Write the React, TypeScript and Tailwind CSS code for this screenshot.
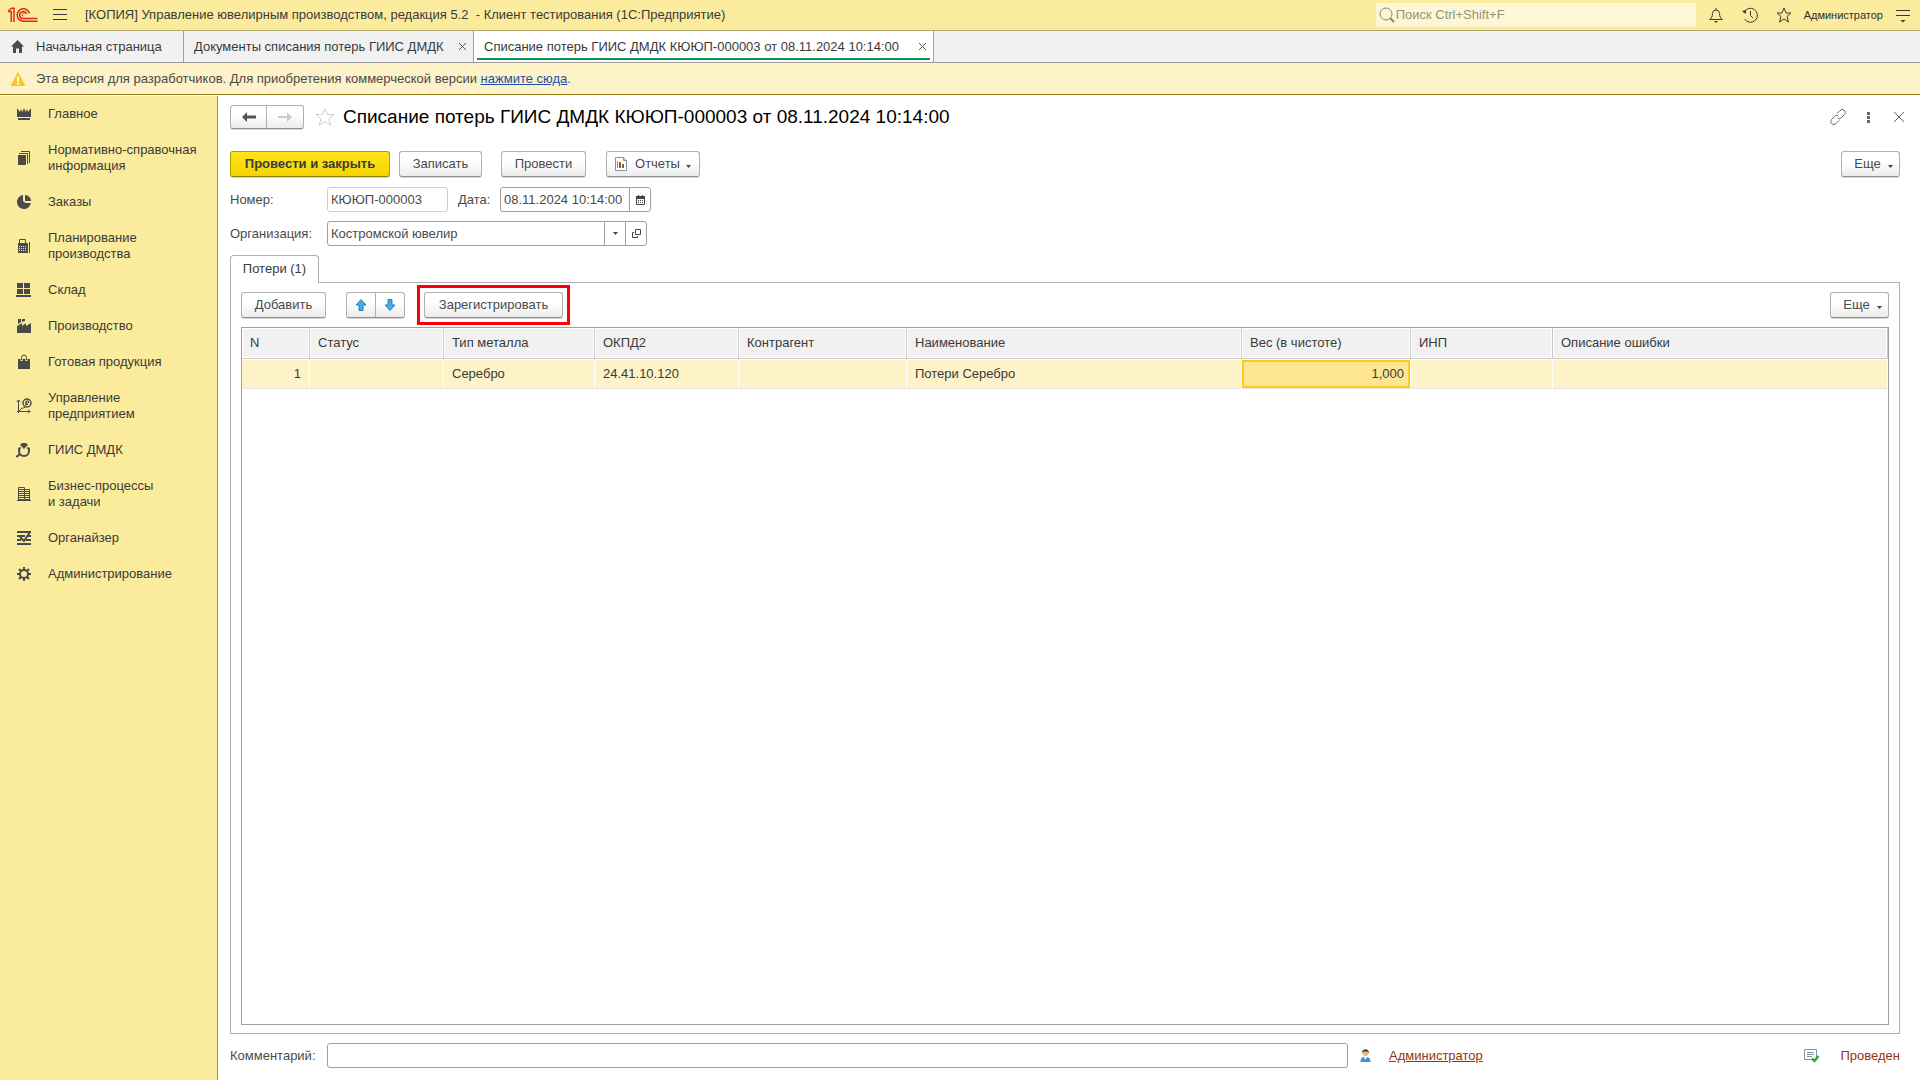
import type { ReactNode } from "react"
import { useState } from "react"

type NavItem = {
  label: string
  icon: ReactNode
}

type LossRow = {
  n: number
  status: string
  metal: string
  okpd: string
  contractor: string
  name: string
  weight: string
  inp: string
  error: string
}

const INK = "#4a4a4a"

const navItems: NavItem[] = [
  {
    label: "Главное",
    icon: (
      <>
        <path d="M1 2l3 4 1-3 1.500 3L8 2l1.500 4L11 3l1 3 3-4v9H1z" fill={INK} />
        <path d="M2 12h12v2H2z" fill={INK} />
      </>
    ),
  },
  {
    label: "Нормативно-справочная\nинформация",
    icon: (
      <>
        <path d="M2 5h8v10H2z" fill={INK} />
        <path d="M3 3.500h8.500V14M5 1.500h8.500V13" fill="none" stroke={INK} />
      </>
    ),
  },
  {
    label: "Заказы",
    icon: (
      <>
        <path d="M7 1.100A7 7 0 1 0 14.900 9H9.500L7 7z" fill={INK} />
        <path d="M9 1a6 6 0 0 1 6 6H9z" fill={INK} />
      </>
    ),
  },
  {
    label: "Планирование\nпроизводства",
    icon: (
      <>
        <path d="M3.500 6v-4.500h6V6" fill="none" stroke={INK} />
        <path d="M2 5h9a1 1 0 0 1 1 1v9H2z" fill={INK} />
        <path d="M13.500 4v11" stroke={INK} />
        <path d="M3 8.500h8M3 10.500h8M3 12.500h8" stroke="#fbec9d" strokeDasharray="1 1" />
        <path d="M4 4.500h5" stroke="#fbec9d" />
      </>
    ),
  },
  {
    label: "Склад",
    icon: <path d="M1 1h6v5H1zM8 1h6v5H8zM1 7h6v5H1zM8 7h6v5H8zM0 13h15v2H0z" fill={INK} />,
  },
  {
    label: "Производство",
    icon: <path d="M1 15V8l5-3v3l4-3v3l5-3v10zM2 1h3v3L2 6zM6 1h3v2L6 4z" fill={INK} />,
  },
  {
    label: "Готовая продукция",
    icon: (
      <>
        <path d="M2 5h12v10H2z" fill={INK} />
        <path d="M5.500 7V3.500a2.500 2.500 0 0 1 5 0V7" fill="none" stroke="#fbec9d" strokeWidth="2" />
        <path d="M5.500 6V3.500a2.500 2.500 0 0 1 5 0V6" fill="none" stroke={INK} />
      </>
    ),
  },
  {
    label: "Управление\nпредприятием",
    icon: (
      <>
        <path d="M2.500 15V2M0.500 4l2-2 2 2M1 13.500h13M12 11.500l2 2-2 2M3 13l3-3h2l1-1" fill="none" stroke={INK} />
        <circle cx="11" cy="5" r="4" fill="none" stroke={INK} strokeWidth="1.500" />
        <path d="M10 7.500V3h2.500v2H9M9 6.500h3" fill="none" stroke={INK} />
      </>
    ),
  },
  {
    label: "ГИИС ДМДК",
    icon: (
      <>
        <circle cx="8" cy="9" r="5" fill="none" stroke={INK} strokeWidth="2" />
        <path d="M3 1h10v6l-5-1-5 1z" fill="#fbec9d" />
        <path d="M6 1h4l2 2-4 4-4-4zM2 6l2-1 1 1-2 3zM14 6l-2-1-1 1 2 3z" fill={INK} />
        <path d="M4 12l-3.500 3" stroke={INK} strokeWidth="2" />
      </>
    ),
  },
  {
    label: "Бизнес-процессы\nи задачи",
    icon: (
      <>
        <path d="M2.500 15V1.500h6V15M8.500 3.500h5V15M1 14.500h14" fill="none" stroke={INK} />
        <path d="M2 3.500h6M2 5.500h12M2 7.500h12M2 9.500h12M2 11.500h12M2 13.500h12" stroke={INK} />
      </>
    ),
  },
  {
    label: "Органайзер",
    icon: (
      <>
        <path d="M1 2h14M1 6h8M12 6h3M1 10h4M10 10h5M1 14h14" stroke={INK} strokeWidth="2" />
        <path d="M4 7l4 4 6-9" fill="none" stroke={INK} strokeWidth="2" />
      </>
    ),
  },
  {
    label: "Администрирование",
    icon: (
      <>
        <circle cx="8" cy="8" r="4" fill="none" stroke={INK} strokeWidth="2" />
        <path
          d="M8 1v3M8 12v3M1 8h3M12 8h3M3 3l2 2M11 11l2 2M13 3l-2 2M5 11l-2 2"
          stroke={INK}
          strokeWidth="2"
        />
      </>
    ),
  },
]

const columns = [
  { title: "N", width: "w-[68px]" },
  { title: "Статус", width: "w-[134px]" },
  { title: "Тип металла", width: "w-[151px]" },
  { title: "ОКПД2", width: "w-[144px]" },
  { title: "Контрагент", width: "w-[168px]" },
  { title: "Наименование", width: "w-[335px]" },
  { title: "Вес (в чистоте)", width: "w-[169px]" },
  { title: "ИНП", width: "w-[142px]" },
  { title: "Описание ошибки", width: "" },
]

const rows: LossRow[] = [
  {
    n: 1,
    status: "",
    metal: "Серебро",
    okpd: "24.41.10.120",
    contractor: "",
    name: "Потери Серебро",
    weight: "1,000",
    inp: "",
    error: "",
  },
]

const buttonClass =
  "flex h-[26px] items-center justify-center rounded-[3px] border border-[#b0b0b0] border-b-[#8f8f8f] bg-linear-to-b from-white from-40% to-[#ececec] text-[#4a4a4a] shadow-[0_1px_0_#d8d8d8]"

const cellClass = "border-t border-r border-b border-white border-b-[#e4e4e4]"

function Caret() {
  return (
    <svg className="h-[3px] w-[5px]" viewBox="0 0 5 3">
      <path d="M0 0h5L2.500 3z" fill="#444" />
    </svg>
  )
}

function Logo() {
  return (
    <svg className="h-4 w-[30px]" viewBox="0 0 30 16" fill="none" stroke="#e0251b" strokeWidth="1.500">
      <path d="M0 4.500h3.250V15M0.500 3.500L3.500 1.250h2.500V15" />
      <path d="M21.500 6.500A6.250 6.250 0 1 0 15.500 14.250H29.500" />
      <path d="M18.500 7A3.500 3.500 0 1 0 15.500 11.500H29.500" />
      <path d="M16.500 6.500a1.500 1.500 0 1 0-1 2.500" strokeWidth="1" />
    </svg>
  )
}

function TopBar() {
  return (
    <header className="flex h-[31px] items-center border-b border-[#b0a86c] bg-[#fbec9d] pr-2.5 pl-2">
      <Logo />
      <button type="button" aria-label="Меню" className="ml-[15px]">
        <svg className="h-4 w-[14px]" viewBox="0 0 14 16">
          <path d="M0 2.500h14M0 7.500h14M0 12.500h14" stroke="#3a3a3a" />
        </svg>
      </button>
      <h1 className="ml-[18px] whitespace-pre text-[13px] text-[#3a3a3a]">
        {"[КОПИЯ] Управление ювелирным производством, редакция 5.2  - Клиент тестирования (1С:Предприятие)"}
      </h1>
      <label className="mr-3 ml-auto flex h-6 w-80 items-center rounded-[2px] bg-[#fdf7d6] pl-[3px]">
        <svg className="h-4 w-4 shrink-0" viewBox="0 0 16 16" fill="none" stroke="#8a866f">
          <circle cx="7" cy="7" r="6" />
          <path d="M11 11l4 4" strokeWidth="2" />
        </svg>
        <input
          aria-label="Поиск"
          placeholder="Поиск Ctrl+Shift+F"
          className="ml-px w-full bg-transparent text-[13px] outline-none placeholder:text-[#97927a]"
        />
      </label>
      <button type="button" aria-label="Уведомления" className="mr-[18px]">
        <svg className="h-4 w-4" viewBox="0 0 16 16" fill="none" stroke="#3a3a3a">
          <path d="M1.500 12.500c2-1.500 3-3 3-6a3.500 3.500 0 0 1 7 0c0 3 1 4.500 3 6zM8 1v2" />
          <path d="M6 14h4l-2 2z" fill="#3a3a3a" stroke="none" />
        </svg>
      </button>
      <button type="button" aria-label="История" className="mr-[18px]">
        <svg className="h-4 w-4" viewBox="0 0 16 16" fill="none" stroke="#3a3a3a">
          <path d="M2 5.500A7 7 0 1 1 2.500 12M8.500 4v4.500l2.500 2.500" />
          <path d="M0 4l4-1v4z" fill="#3a3a3a" stroke="none" />
        </svg>
      </button>
      <button type="button" aria-label="Избранное" className="mr-3">
        <svg className="h-4 w-4" viewBox="0 0 16 16" fill="none" stroke="#3a3a3a">
          <path d="M8 1l2 5h5l-4 3.500 1.500 5.500L8 12l-4.500 3L5 9.500 1 6h5z" />
        </svg>
      </button>
      <a href="#user" className="mr-[13px] text-[11px] text-[#2e2e2e]">
        Администратор
      </a>
      <button type="button" aria-label="Настройки">
        <svg className="h-4 w-[14px]" viewBox="0 0 14 16">
          <path d="M0 3.500h14M0 8.500h14" stroke="#3a3a3a" />
          <path d="M4.500 13h5L7 15.500z" fill="#3a3a3a" />
        </svg>
      </button>
    </header>
  )
}

function CloseMark() {
  return (
    <svg className="h-[7px] w-[7px]" viewBox="0 0 7 7">
      <path d="M0 0l7 7M7 0L0 7" stroke="#555" />
    </svg>
  )
}

function WindowTabs() {
  return (
    <nav className="flex h-8 border-b border-[#9c9c9c] bg-[#f1f1f1] text-[13px] text-[#3a3a3a]">
      <a href="#home" className="flex w-[184px] items-center border-r border-[#a0a0a0] pl-[11px]">
        <svg className="mr-3 h-[13px] w-[13px]" viewBox="0 0 13 13">
          <path d="M6.500 0L13 6.500h-2V13H8V8.500H5V13H2V6.500H0z" fill={INK} />
        </svg>
        Начальная страница
      </a>
      <div className="flex w-[290px] items-center justify-between border-r border-[#a0a0a0] pr-[7px] pl-2.5 whitespace-nowrap">
        <a href="#list">Документы списания потерь ГИИС ДМДК</a>
        <button type="button" aria-label="Закрыть вкладку">
          <CloseMark />
        </button>
      </div>
      <div className="flex w-[460px] border-r border-[#a0a0a0] bg-white px-[3px] pb-0.5">
        <div className="flex w-full items-center justify-between border-b-2 border-[#0a9850] pt-1 pr-1 pl-[7px] whitespace-nowrap">
          <a href="#doc">Списание потерь ГИИС ДМДК КЮЮП-000003 от 08.11.2024 10:14:00</a>
          <button type="button" aria-label="Закрыть вкладку">
            <CloseMark />
          </button>
        </div>
      </div>
    </nav>
  )
}

function Notice() {
  return (
    <div className="flex h-8 items-center border-b border-[#9a7d1c] bg-[#fdf2c8] pl-[11px] text-[13px] text-[#4a4a4a]">
      <svg className="mr-[11px] h-[14px] w-[14px]" viewBox="0 0 14 14">
        <path d="M7 0.500L14 14H0z" fill="#f9c81e" stroke="#f9c81e" strokeLinejoin="round" />
        <path d="M7 4.500v5M7 10.500v2" stroke="#fff" strokeWidth="2" />
      </svg>
      <p>
        Эта версия для разработчиков. Для приобретения коммерческой версии{" "}
        <a href="#buy" className="text-[#1c4fa8] underline">
          нажмите сюда
        </a>
        .
      </p>
    </div>
  )
}

function Sidebar() {
  return (
    <aside className="mt-px w-[218px] shrink-0 border-r border-[#9a925c] bg-[#fbec9d]">
      {navItems.map((item) => (
        <a
          key={item.label}
          href="#section"
          className="flex items-center gap-4 py-2.5 pl-4 text-[13px] leading-4 whitespace-pre-line text-[#3a3a3a]"
        >
          <svg className="h-4 w-4 shrink-0" viewBox="0 0 16 16">
            {item.icon}
          </svg>
          <span>{item.label}</span>
        </a>
      ))}
    </aside>
  )
}

function FormHeader() {
  return (
    <div className="flex h-6 items-center">
      <div className="flex h-6 w-[74px] rounded-[3px] border border-[#b0b0b0] border-b-[#8f8f8f] bg-linear-to-b from-white from-40% to-[#ececec] shadow-[0_1px_0_#d8d8d8]">
        <button type="button" aria-label="Назад" className="flex w-1/2 items-center justify-center border-r border-[#b0b0b0]">
          <svg className="h-[10px] w-[14px]" viewBox="0 0 14 10">
            <path d="M0 5l5-5v3.500h9v3H5V10z" fill="#555" />
          </svg>
        </button>
        <button type="button" aria-label="Вперед" className="flex w-1/2 items-center justify-center">
          <svg className="h-[10px] w-[14px]" viewBox="0 0 14 10">
            <path d="M14 5L9 0v4H0v2h9v4z" fill="#ccc" />
          </svg>
        </button>
      </div>
      <button type="button" aria-label="В избранное" className="ml-[11px]">
        <svg className="h-5 w-5" viewBox="0 0 20 20">
          <path
            d="M10 1.500l2.500 6H19l-5 4.500 1.800 6.500L10 14.500l-5.800 4L6 12 1 7.500h6.500z"
            fill="none"
            stroke="#d0d0d0"
          />
        </svg>
      </button>
      <h2 className="ml-2 text-[19px] text-black">Списание потерь ГИИС ДМДК КЮЮП-000003 от 08.11.2024 10:14:00</h2>
      <div className="-mr-1 ml-auto flex items-center">
        <button type="button" aria-label="Ссылка">
          <svg className="h-4 w-4" viewBox="0 0 16 16" fill="none" stroke="#666">
            <path d="M7 4.500l3-3a2.500 2.500 0 0 1 4.500 4L11 9c-1 1-2.500 1-3.500 0" />
            <path d="M9 11.500l-3 3a2.500 2.500 0 0 1-4.500-4L5 7c1-1 2.500-1 3.500 0" />
          </svg>
        </button>
        <button type="button" aria-label="Действия" className="mr-6 ml-[21px]">
          <svg className="h-[11px] w-[3px]" viewBox="0 0 3 11">
            <path d="M0 0h3v3H0zM0 4h3v3H0zM0 8h3v3H0z" fill="#666" />
          </svg>
        </button>
        <button type="button" aria-label="Закрыть">
          <svg className="h-[10px] w-[10px]" viewBox="0 0 10 10">
            <path d="M0 0l10 10M10 0L0 10" stroke="#666" />
          </svg>
        </button>
      </div>
    </div>
  )
}

function CommandBar() {
  return (
    <div className="mt-[22px] flex">
      <button
        type="button"
        className="h-[26px] w-40 rounded-[3px] border border-[#b39c00] border-b-[#8f7c00] bg-linear-to-b from-[#ffe61a] to-[#f5d400] font-bold text-[#3a3a3a] shadow-[0_1px_0_#d8d8d8]"
      >
        Провести и закрыть
      </button>
      <button type="button" className={`${buttonClass} ml-[9px] w-[83px]`}>
        Записать
      </button>
      <button type="button" className={`${buttonClass} ml-[19px] w-[85px]`}>
        Провести
      </button>
      <button type="button" className={`${buttonClass} ml-5 w-[94px]`}>
        <svg className="mr-2 h-[14px] w-3" viewBox="0 0 12 14">
          <path d="M0.500 0.500h8l3 3v10h-11z" fill="#fff" stroke="#8194a6" />
          <path d="M8.500 0.500v3h3" fill="none" stroke="#8194a6" />
          <path d="M2 4h1v7H2z" fill="#8194a6" />
          <path d="M4 5h2v6H4z" fill="#e33" />
          <path d="M7 7h2v4H7z" fill="#292" />
        </svg>
        Отчеты
        <span className="ml-1.5 pt-1">
          <Caret />
        </span>
      </button>
      <MoreButton />
    </div>
  )
}

function MoreButton() {
  return (
    <button type="button" className={`${buttonClass} ml-auto w-[59px] gap-[7px] pl-1.5`}>
      Еще
      <span className="pt-1">
        <Caret />
      </span>
    </button>
  )
}

function HeaderFields() {
  return (
    <>
      <div className="mt-2.5 flex h-[25px] items-center">
        <label htmlFor="number" className="w-[97px]">
          Номер:
        </label>
        <input
          id="number"
          defaultValue="КЮЮП-000003"
          className="h-[25px] w-[121px] rounded-[3px] border border-[#cfcfcf] px-[3px] outline-none"
        />
        <label htmlFor="date" className="ml-2.5 w-[42px]">
          Дата:
        </label>
        <div className="flex h-[25px] w-[151px] rounded-[3px] border border-[#a0a0a0]">
          <input id="date" defaultValue="08.11.2024 10:14:00" className="w-[128px] pl-[3px] outline-none" />
          <button
            type="button"
            aria-label="Выбрать дату"
            className="flex flex-1 items-center justify-center border-l border-[#a0a0a0]"
          >
            <svg className="h-[10px] w-[9px]" viewBox="0 0 9 10">
              <path d="M0.500 1.500h8v8h-8z" fill="none" stroke="#444" />
              <path d="M0 1h9v3H0zM2 0h1v1H2zM6 0h1v1H6z" fill="#444" />
              <path d="M2 5.500h5M2 7.500h5" stroke="#444" strokeDasharray="1 1" />
            </svg>
          </button>
        </div>
      </div>
      <div className="mt-[9px] flex h-[25px] items-center">
        <label htmlFor="organization" className="w-[97px]">
          Организация:
        </label>
        <div className="flex h-[25px] w-80 rounded-[3px] border border-[#a0a0a0]">
          <input id="organization" defaultValue="Костромской ювелир" className="min-w-0 flex-1 pl-[3px] outline-none" />
          <button
            type="button"
            aria-label="Выбрать"
            className="flex w-[21px] items-center justify-center border-l border-[#a0a0a0]"
          >
            <Caret />
          </button>
          <button
            type="button"
            aria-label="Открыть"
            className="flex w-[21px] items-center justify-center border-l border-[#a0a0a0]"
          >
            <svg className="h-[9px] w-[9px]" viewBox="0 0 9 9" fill="none" stroke="#444">
              <path d="M3.500 0.500h5v5h-5zM2 3.500H0.500v5h5V7" />
            </svg>
          </button>
        </div>
      </div>
    </>
  )
}

function LossTable() {
  const [selected, setSelected] = useState(1)

  return (
    <div className="mt-[9px] flex-1 border border-[#a0a0a0]">
      <table className="w-full table-fixed border-separate border-spacing-0 text-[#3a3a3a]">
        <thead>
          <tr className="h-[31px]">
            {columns.map((column) => (
              <th
                key={column.title}
                className={`${column.width} border-r border-b border-[#c9c9c9] bg-[#f1f1f1] px-2 text-left font-normal shadow-[inset_0_0_0_1px_#fff]`}
              >
                {column.title}
              </th>
            ))}
          </tr>
        </thead>
        <tbody>
          {rows.map((row) => (
            <tr
              key={row.n}
              onClick={() => setSelected(row.n)}
              className={`h-[30px] ${selected === row.n ? "bg-[#fdf2c8]" : "bg-white"}`}
            >
              <td className={`${cellClass} px-2 text-right`}>{row.n}</td>
              <td className={`${cellClass} px-2`}>{row.status}</td>
              <td className={`${cellClass} px-2`}>{row.metal}</td>
              <td className={`${cellClass} px-2`}>{row.okpd}</td>
              <td className={`${cellClass} px-2`}>{row.contractor}</td>
              <td className={`${cellClass} px-2`}>{row.name}</td>
              <td className={`${cellClass} bg-[#fee591] px-1.5 text-right shadow-[inset_0_0_0_2px_#fbc91f]`}>
                {row.weight}
              </td>
              <td className={`${cellClass} px-2`}>{row.inp}</td>
              <td className={`${cellClass} px-2`}>{row.error}</td>
            </tr>
          ))}
        </tbody>
      </table>
    </div>
  )
}

function LossesPanel() {
  return (
    <>
      <div className="mt-[9px] flex">
        <button
          type="button"
          className="relative -mb-px h-7 w-[89px] rounded-t-[4px] border border-b-0 border-[#b0b0b0] bg-white pb-0.5 text-[#3a3a3a]"
        >
          Потери (1)
        </button>
      </div>
      <section className="flex flex-1 flex-col border border-[#b0b0b0] px-2.5 pt-[9px] pb-2">
        <div className="flex">
          <button type="button" className={`${buttonClass} w-[85px]`}>
            Добавить
          </button>
          <div className={`${buttonClass} ml-5 w-[59px]`}>
            <button
              type="button"
              aria-label="Вверх"
              className="flex h-full flex-1 items-center justify-center border-r border-[#b0b0b0]"
            >
              <svg className="h-3 w-3" viewBox="0 0 12 12">
                <path d="M6 0.500l5 5.500H8v5.500H4V6H1z" fill="#41aeea" stroke="#2b80b3" />
              </svg>
            </button>
            <button type="button" aria-label="Вниз" className="flex h-full flex-1 items-center justify-center">
              <svg className="h-3 w-3" viewBox="0 0 12 12">
                <path d="M6 11.500l5-5.500H8V0.500H4V6H1z" fill="#41aeea" stroke="#2b80b3" />
              </svg>
            </button>
          </div>
          <div className="relative ml-[19px]">
            <button type="button" className={`${buttonClass} w-[139px]`}>
              Зарегистрировать
            </button>
            <div className="pointer-events-none absolute -inset-[7px] border-3 border-[#fb0007]" />
          </div>
          <MoreButton />
        </div>
        <LossTable />
      </section>
    </>
  )
}

function FormFooter() {
  return (
    <footer className="mt-[9px] mb-3 flex h-[25px] items-center">
      <label htmlFor="comment" className="w-[97px] shrink-0">
        Комментарий:
      </label>
      <input id="comment" className="h-[25px] flex-1 rounded-[3px] border border-[#a0a0a0] px-[3px] outline-none" />
      <div className="flex w-[552px] items-center pl-3 text-[#93360d]">
        <svg className="h-[13px] w-[11px]" viewBox="0 0 11 13">
          <path d="M0.500 13c0-4 2-5 5-5s5 1 5 5z" fill="#3c94c8" />
          <path d="M4 8l1.500 3L7 8z" fill="#fff" />
          <circle cx="5.500" cy="4" r="3" fill="#f0b96b" />
          <path d="M2 4c0-5 7-5 7 0L7.500 2.500h-4z" fill="#3f3a35" />
        </svg>
        <a href="#author" className="ml-[18px] underline">
          Администратор
        </a>
        <svg className="mr-[21px] ml-auto h-[14px] w-[15px]" viewBox="0 0 15 14">
          <path d="M0.500 0.500h12v10H0.500z" fill="#fff" stroke="#8194a6" />
          <path d="M3 3.500h7M3 5.500h7M3 7.500h5" stroke="#8194a6" />
          <path d="M8 9.500l2.500 2.500L14.500 7" fill="none" stroke="#27b035" strokeWidth="2.500" />
        </svg>
        <span>Проведен</span>
      </div>
    </footer>
  )
}

export default function App() {
  return (
    <div className="flex min-h-screen flex-col bg-white font-['Liberation_Sans',Arial,sans-serif]">
      <TopBar />
      <WindowTabs />
      <Notice />
      <div className="flex flex-1">
        <Sidebar />
        <main className="flex min-w-0 flex-1 flex-col pt-2.5 pr-5 pl-3 text-[13px] leading-5 text-[#4a4a4a]">
          <FormHeader />
          <CommandBar />
          <HeaderFields />
          <LossesPanel />
          <FormFooter />
        </main>
      </div>
    </div>
  )
}
